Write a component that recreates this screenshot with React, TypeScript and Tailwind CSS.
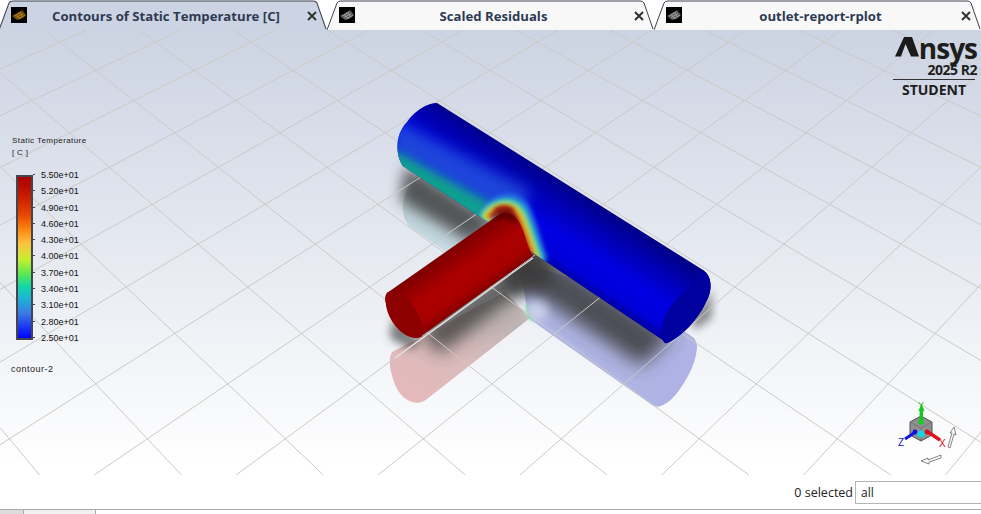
import React from "react";

const H = -850;
const VA = [-1067, H];
const VB = [2035, H];
const Y0 = 42;
function lineThrough(v: number[], x: number) {
  const ya = 30;
  const yb = 475;
  const at = (y: number) => v[0] + ((x - v[0]) * (y - H)) / (Y0 - H);
  return { x1: at(ya), y1: ya, x2: at(yb), y2: yb };
}
const ks = Array.from({ length: 60 }, (_, i) => i - 25);

function Grid() {
  return (
    <g stroke="#cacac6" strokeWidth="1">
      {ks.map((k) => {
        const a = lineThrough(VA, 60 + 95.5 * k);
        const b = lineThrough(VB, 60 + 95.5 * k);
        return (
          <g key={k}>
            <line {...a} />
            <line {...b} />
          </g>
        );
      })}
    </g>
  );
}

const MAIN =
  "M437 103 L703 270 C712 276 713 290 706 302 C698 320 680 338 667 343 L533 253 L488 222 L403 166 C395 155 395 134 407 122 C415 110 428 103 437 103 Z";
const BRANCH =
  "M387 293 L497 216 C508 208 517 215 522 228 C526 238 528 248 533 256 L420 337 C408 336 391 322 385 300 Q385 295 387 293 Z";

function Scene() {
  return (
    <svg className="absolute inset-0 w-full h-full" viewBox="0 30 981 451">
      <defs>
        <filter id="b1" x="-30%" y="-30%" width="160%" height="160%"><feGaussianBlur stdDeviation="1.2" /></filter>
        <filter id="b2" x="-30%" y="-30%" width="160%" height="160%"><feGaussianBlur stdDeviation="2" /></filter>
        <filter id="b4" x="-30%" y="-30%" width="160%" height="160%"><feGaussianBlur stdDeviation="4" /></filter>
        <filter id="b5" x="-30%" y="-30%" width="160%" height="160%"><feGaussianBlur stdDeviation="5" /></filter>
        <filter id="b8" x="-30%" y="-30%" width="160%" height="160%"><feGaussianBlur stdDeviation="7" /></filter>
        <filter id="b12" x="-30%" y="-30%" width="160%" height="160%"><feGaussianBlur stdDeviation="9" /></filter>
        <linearGradient id="tube" gradientUnits="userSpaceOnUse" x1="570" y1="186" x2="528" y2="250">
          <stop offset="0" stopColor="#000088" />
          <stop offset="0.25" stopColor="#0000b0" />
          <stop offset="0.6" stopColor="#0000e4" />
          <stop offset="0.88" stopColor="#0000d8" />
          <stop offset="1" stopColor="#0000a8" />
        </linearGradient>
        <linearGradient id="red" gradientUnits="userSpaceOnUse" x1="443" y1="253" x2="475" y2="298">
          <stop offset="0" stopColor="#7c0000" />
          <stop offset="0.45" stopColor="#aa0000" />
          <stop offset="0.8" stopColor="#a80000" />
          <stop offset="1" stopColor="#820000" />
        </linearGradient>
        <linearGradient id="pinkFade" gradientUnits="userSpaceOnUse" x1="410" y1="395" x2="470" y2="300">
          <stop offset="0" stopColor="#e4b6b8" />
          <stop offset="0.55" stopColor="#d8b8b8" />
          <stop offset="1" stopColor="#bcb0b0" />
        </linearGradient>
        <linearGradient id="tealFade" gradientUnits="userSpaceOnUse" x1="425" y1="250" x2="450" y2="195">
          <stop offset="0" stopColor="#c6dfe6" />
          <stop offset="1" stopColor="#a8b4bc" />
        </linearGradient>
        <clipPath id="mainClip"><path d={MAIN} /></clipPath>
      </defs>

      {/* reflections */}
      <path d="M418 176 C402 190 398 212 409 226 L446 252 L500 224 Z" fill="url(#tealFade)" opacity="0.9" />
      <path d="M392 352 L505 292 L530 318 L427 399 C416 408 400 400 394 382 C390 370 388 360 392 352 Z" fill="url(#pinkFade)" opacity="0.95" />
      <path d="M528 318 L652 405 C660 410 672 402 682 386 C694 368 700 350 694 338 L640 300 L520 262 Z" fill="#aab0e2" opacity="0.95" />
      <path d="M655 398 C648 388 660 360 676 345 C686 335 697 335 697 347 C696 365 680 396 658 407 Z" fill="#aeb2e4" />

      {/* shadows */}
      <g fill="#3a3a3a">
        <path d="M405 165 L495 222 L472 243 L400 200 Z" opacity="0.8" filter="url(#b8)" />
        <path d="M522 238 L672 336 L642 366 L508 276 Z" opacity="0.85" filter="url(#b12)" />
        <path d="M420 332 L533 246 L528 285 L440 354 Z" opacity="0.82" filter="url(#b12)" />
        <path d="M505 250 L548 252 L550 288 L505 296 Z" opacity="0.8" filter="url(#b8)" />
        <path d="M392 318 L420 340 L412 350 L390 338 Z" opacity="0.65" filter="url(#b4)" />
        <path d="M690 318 L712 290 L712 318 L695 330 Z" opacity="0.55" filter="url(#b4)" />
      </g>
      <ellipse cx="537" cy="311" rx="11" ry="10" fill="#e0e6f0" opacity="0.6" filter="url(#b4)" />
      <path d="M527 304 C525 310 527 316 532 321" fill="none" stroke="#90e0a8" strokeWidth="3" opacity="0.65" filter="url(#b1)" />
      <Grid />
      <path d="M395 358 L533 258" stroke="#e4e4e4" strokeWidth="1.2" />

      {/* main pipe */}
      <path d={MAIN} fill="url(#tube)" />
      <g clipPath="url(#mainClip)">
        <path d="M392 118 L530 190 L512 232 L392 172 Z" fill="#2a62d8" opacity="0.7" filter="url(#b8)" />
        <path d="M390 148 L495 206 L484 232 L390 178 Z" fill="#0fa08e" filter="url(#b5)" />
        <g fill="none" strokeLinecap="round" filter="url(#b2)">
          <path d="M490 216 C498 204 513 200 520 212 C527 226 530 242 536 258" stroke="#2868e4" strokeWidth="22" />
          <path d="M488 216 C497 205 512 202 519 214 C526 228 529 242 535 258" stroke="#10c0b0" strokeWidth="16" />
          <path d="M488 216 C497 206 511 204 518 215 C525 229 528 243 534 258" stroke="#a0e040" strokeWidth="12" />
          <path d="M490 216 C499 207 510 205 517 216 C524 230 527 244 533 258" stroke="#f89020" strokeWidth="8" />
          <path d="M492 216 C499 208 509 206 515 217 C522 231 526 245 531 258" stroke="#a00c08" strokeWidth="6" />
        </g>
        <ellipse cx="504" cy="211" rx="10" ry="5" fill="#96160a" filter="url(#b2)" />
      </g>
      <path d="M686 291 C672 300 658 322 662 338 C663 342 665 344 667 343 C682 336 698 320 706 302 C713 290 712 276 703 270 C698 272 692 286 686 291 Z" fill="#00009e" />

      {/* branch pipe */}
      <path d={BRANCH} fill="url(#red)" />
      <path d="M492 220 C502 207 514 210 518 224 L506 218 Z" fill="#4a0000" opacity="0.75" filter="url(#b2)" />
      <path d="M387 293 C383 303 388 320 400 331 C408 338 418 340 422 336 C426 330 420 316 412 304 C406 296 392 288 387 293 Z" fill="#8c0000" />
    </svg>
  );
}

function Triad() {
  return (
    <svg className="absolute left-[890px] top-[366px] w-[80px] h-[80px]" viewBox="890 396 80 80">
      <path d="M921 416 L932 422 L932 435 L921 441 L910 435 L910 422 Z" fill="#8f8f8f" stroke="#555" strokeWidth="1" />
      <path d="M921 428 L932 422 M921 428 L910 422 M921 428 L921 441" stroke="#666" strokeWidth="0.6" />
      <path d="M921 424 L921.5 408" stroke="#10c820" strokeWidth="3.4" />
      <path d="M921.5 404 L918.5 411 L924.5 411 Z" fill="#10c820" />
      <circle cx="921" cy="422" r="2.7" fill="#10d020" />
      <path d="M928 432 L940 440" stroke="#e01020" strokeWidth="3.4" />
      <circle cx="927" cy="432" r="2.4" fill="#d01020" />
      <path d="M914 433 L905 439" stroke="#1010e0" strokeWidth="3" />
      <circle cx="915" cy="432" r="2.4" fill="#1010e0" />
      <circle cx="921" cy="434" r="3.5" fill="#10d8e0" />
      <text x="918" y="408" fontSize="9" fill="#10c820" fontFamily="Liberation Sans, sans-serif">Y</text>
      <text x="939" y="447" fontSize="10" fill="#d01020" fontFamily="Liberation Sans, sans-serif">X</text>
      <text x="898" y="446" fontSize="10" fill="#1010e0" fontFamily="Liberation Sans, sans-serif">Z</text>
      <path d="M948 447 L952 433 L950 433 L954 427 L956 435 L954 434 L950 448 Z" fill="#fff" stroke="#666" strokeWidth="0.8" />
      <path d="M921 461 L928 458 L928 460 L941 455 L941 458 L929 462 L929 464 Z" fill="#fff" stroke="#666" strokeWidth="0.8" />
    </svg>
  );
}

const TICKS = ["5.50e+01","5.20e+01","4.90e+01","4.60e+01","4.30e+01","4.00e+01","3.70e+01","3.40e+01","3.10e+01","2.80e+01","2.50e+01"];

function Legend() {
  return (
    <div className="absolute left-[12px] top-[105px] font-['Liberation_Sans',sans-serif] text-[#222]">
      <div className="text-[8px] leading-[12px] tracking-[0.42px] whitespace-nowrap">Static Temperature</div>
      <div className="text-[8px] leading-[11px] tracking-[0.3px]">[ C ]</div>
      <div className="flex mt-[17px] ml-[4px]">
        <div className="w-[17px] h-[165px] border-2 border-[#45454f] bg-[linear-gradient(to_bottom,#a80000_0%,#c81c00_12%,#e84a00_24%,#ff8a10_33%,#ffc040_41%,#c8ee30_51%,#60e850_60%,#10d8a8_68%,#20b0d8_76%,#3a78e8_85%,#2040f0_92%,#0000ff_100%)]" />
        <div className="flex flex-col justify-between h-[173px] ml-[8px] -mt-[5px]">
          {TICKS.map((t) => (
            <div key={t} className="relative text-[9px] leading-[10px] text-[#111]">
              <span className="absolute -left-[8px] top-[4px] w-[2px] h-[1px] bg-[#444]" />
              {t}
            </div>
          ))}
        </div>
      </div>
      <div className="text-[9px] leading-[12px] mt-[20px] -ml-[1px] tracking-[0.5px]">contour-2</div>
    </div>
  );
}

function Logo() {
  return (
    <div className="absolute right-[4px] top-[2px] w-[82px] flex flex-col items-end text-[#1d1d1d] font-['Open_Sans',sans-serif]">
      <div className="text-[28px] leading-[32px] font-bold tracking-[-1px] flex">
        <span className="relative text-transparent w-[24px]">
          A
          <svg className="absolute left-0 top-[5px] w-[24px] h-[20px]" viewBox="0 0 24 20">
            <path d="M9 0 L17 0 L24 19.5 L16 19.5 L10.5 7 L6 19.5 L0 19.5 Z" fill="#1b1b1b" />
          </svg>
        </span>
        <span>nsys</span>
      </div>
      <div className="text-[14px] leading-[15px] -mt-[2px] font-bold tracking-[-0.5px] whitespace-nowrap">2025 R2</div>
      <div className="w-full h-px bg-[#333] mt-[2px] mr-[2px]" />
      <div className="text-[14px] leading-[17px] mt-[1px] font-bold w-full text-center pr-[4px]">STUDENT</div>
    </div>
  );
}

function TabIcon({ active }: { active: boolean }) {
  const c = active ? "#c08a1c" : "#a8a8a8";
  const d = active ? "#6e4c0c" : "#5a5a5a";
  return (
    <svg className="absolute left-[12px] top-[7px] w-[16px] h-[16px]" viewBox="0 0 16 16">
      <rect width="16" height="16" fill="#000" />
      <path d="M1 9 L8 5 L11 3 L15 8 L12 11 L6 13 Z" fill={d} />
      <path d="M3 9 L10 5 M5 10.5 L12 6.5 M7 12 L14 8 M5 7.5 L10 12 M8 5.5 L12 10" fill="none" stroke={c} strokeWidth="0.8" />
    </svg>
  );
}

function Tab({ title, active, width }: { title: string; active?: boolean; width: string }) {
  return (
    <div className={`relative h-[30px] shrink-0 ${width}`}>
      <svg className="absolute inset-0 w-full h-full" viewBox="0 0 327 30" preserveAspectRatio="none">
        <path d="M0 30 L10 3 Q11 1 14 1 L313 1 Q316 1 317 3 L327 30 Z" fill={active ? "#ccd3e2" : "#f8f8f8"} stroke="none" />
        <path d="M0 30 L10 3 Q11 1 14 1 L313 1 Q316 1 317 3 L326 29" fill="none" stroke="#3c4250" strokeWidth="1" />
      </svg>
      <TabIcon active={!!active} />
      <div className="absolute left-[34px] right-[28px] top-[7px] text-center text-[13.15px] leading-[18px] font-bold text-[#2d3a52] font-['Open_Sans',sans-serif] whitespace-nowrap">
        {title}
      </div>
      <svg className="absolute right-[10px] top-[11px] w-[10px] h-[10px]" viewBox="0 0 10 10">
        <path d="M1 1 L9 9 M9 1 L1 9" stroke="#333" strokeWidth="2" />
      </svg>
    </div>
  );
}

export default function App() {
  return (
    <div className="w-[981px] h-[514px] overflow-hidden bg-white flex flex-col font-['Open_Sans',sans-serif]">
      <div className="flex h-[30px] bg-white -ml-[1px]">
        <Tab title="Contours of Static Temperature [C]" active width="w-[328px]" />
        <Tab title="Scaled Residuals" width="w-[327px]" />
        <Tab title="outlet-report-rplot" width="w-[327px]" />
      </div>
      <div className="relative h-[451px] bg-[linear-gradient(to_bottom,#ccd3e2_0%,#ffffff_97%)]">
        <Scene />
        <Legend />
        <Logo />
        <Triad />
      </div>
      <div className="h-[28px] flex justify-end items-start bg-white">
        <span className="text-[12.5px] leading-[23px] text-[#222] mr-[2px]">0 selected</span>
        <div className="w-[130px] shrink-0 -mr-[4px] h-[23px] border border-[#b4b4b4] bg-white text-[12px] leading-[22px] pl-[5px] text-[#222]">all</div>
      </div>
      <div className="h-[5px] border-t border-[#aaa] flex">
        <div className="w-[24px] bg-[#dcdcdc] border-r border-[#aaa]" />
        <div className="w-[72px] bg-[#f0f0f0] border-r border-[#aaa]" />
      </div>
    </div>
  );
}
